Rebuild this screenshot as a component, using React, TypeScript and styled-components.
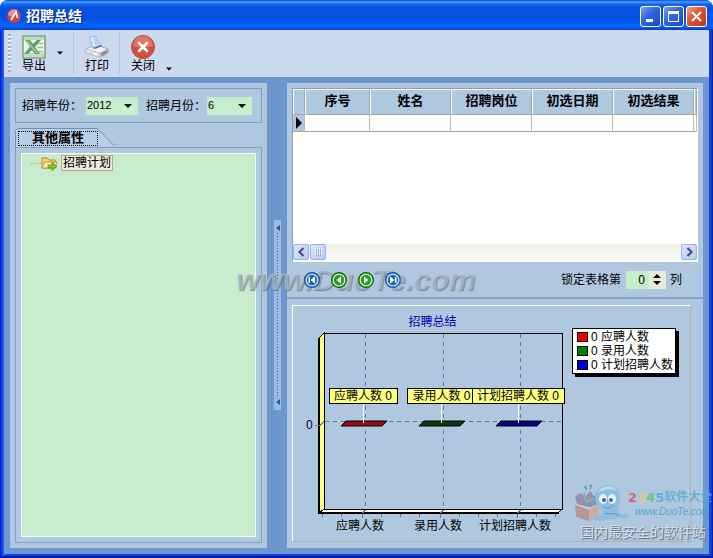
import React, { useState } from 'react';
import styled, { createGlobalStyle, css } from 'styled-components';

const GlobalStyle = createGlobalStyle`
  * { box-sizing: border-box; }
  html, body { margin: 0; background: #fff; }
  body, button, input, select, table {
    font-family: "Liberation Sans", "Noto Sans CJK SC", sans-serif;
    font-size: 12px;
    line-height: 14px;
    color: #000;
  }
  button { padding: 0; border: 0; background: none; cursor: default; }
`;

const line = '#7f9fc4';
const panel = '#b0c8df';
const green = '#c8edcd';

const Window = styled.div`
  position: relative;
  display: flex;
  flex-direction: column;
  min-height: 100vh;
  overflow: hidden;
  border-radius: 8px 8px 0 0;
  background: linear-gradient(90deg, #0014c8 0, #0a46e4 2px, #2b6cf0 4px, #0a46e4 5px, #0a46e4 calc(100% - 4px), #0a46e4 calc(100% - 2px), #0010a0 100%);
  border-bottom: 2px solid #0418b4;
`;

const TitleBar = styled.header`
  display: flex;
  align-items: center;
  gap: 5px;
  height: 30px;
  padding: 2px 6px 0 7px;
  background: linear-gradient(180deg, #0850c0 0, #4a9cff 2px, #1468ec 4px, #0652e0 8px, #0450e2 18px, #0864ff 25px, #0658f0 28px, #003cc0 30px);
`;

const Title = styled.h1`
  flex: 1;
  margin: 0;
  font-size: 14px;
  line-height: 18px;
  color: #fff;
  text-shadow: 1px 1px 1px #0a2080;
`;

const Captions = styled.div`
  display: flex;
  gap: 2px;
`;

const CaptionButton = styled.button<{ $danger?: boolean }>`
  display: grid;
  place-items: center;
  width: 21px;
  height: 21px;
  border: 1px solid #fff;
  border-radius: 3px;
  background: ${(p) =>
    p.$danger
      ? 'linear-gradient(135deg, #f0a088 0, #dd5a38 40%, #bc3814 100%)'
      : 'linear-gradient(135deg, #7ba2f4 0, #3568e2 40%, #1846c0 100%)'};
`;

const Toolbar = styled.nav`
  display: flex;
  align-items: stretch;
  height: 47px;
  margin: 0 4px;
  padding: 3px 4px;
  background: #cbdaee;
`;

const Grip = styled.div`
  width: 3px;
  margin: 1px 11px 2px 0;
  background: repeating-linear-gradient(180deg, #9fb3cf 0, #9fb3cf 2px, #fff 2px, #fff 3px, transparent 3px, transparent 4px);
`;

const ToolButton = styled.button`
  display: flex;
  flex-direction: column;
  align-items: center;
  width: 24px;
  padding-top: 2px;
  line-height: 15px;
  white-space: nowrap;
`;

const ToolDivider = styled.div`
  width: 1px;
  margin: 0 11px 0 10px;
  background: #b4c6df;
`;

const DropButton = styled.button<{ $low?: boolean }>`
  display: flex;
  align-items: ${(p) => (p.$low ? 'flex-end' : 'center')};
  margin-left: 11px;
  padding-bottom: ${(p) => (p.$low ? '3px' : '2px')};
`;

const Body = styled.main`
  display: flex;
  flex: 1;
  margin: 0 4px 2px;
  padding: 6px;
  background: #6c96cc;
`;

const LeftPane = styled.section`
  display: flex;
  flex-direction: column;
  width: 257px;
  padding: 5px;
  background: ${panel};
`;

const Filters = styled.form`
  display: flex;
  align-items: center;
  height: 35px;
  padding: 0 6px;
  border: 1px solid ${line};
`;

const FilterLabel = styled.label`
  width: 60px;
  white-space: nowrap;
`;

const SelectBox = styled.div<{ $wide?: boolean }>`
  display: grid;
  align-items: center;
  width: ${(p) => (p.$wide ? '52px' : '45px')};
  margin: 0 ${(p) => (p.$wide ? '8px' : '0')} 0 ${(p) => (p.$wide ? '4px' : '1px')};
  height: 18px;
  background: ${green};
  & > * { grid-area: 1 / 1; }
  & > svg { justify-self: end; margin-right: 6px; pointer-events: none; }
`;

const Select = styled.select`
  appearance: none;
  width: 100%;
  height: 18px;
  padding: 0 1px 2px;
  border: 0;
  border-radius: 0;
  background: transparent;
  font-size: 11px;
`;

const TabStrip = styled.div`
  display: flex;
  height: 24px;
  padding-top: 5px;
`;

const Tab = styled.button`
  display: grid;
  width: 100px;
  & > * { grid-area: 1 / 1; }
`;

const TabLabel = styled.span`
  z-index: 1;
  width: 78px;
  height: 13px;
  margin: 4px 0 0 4px;
  outline: 1px dotted #000;
  font-size: 13px;
  line-height: 12px;
  font-weight: bold;
`;

const TabPage = styled.div`
  display: flex;
  flex: 1;
  padding: 5px;
  border: 1px solid ${line};
`;

const Tree = styled.ul`
  flex: 1;
  margin: 0;
  padding: 1px 0 0 9px;
  list-style: none;
  border: 1px solid #fff;
  background: ${green};
`;

const TreeItem = styled.li`
  display: flex;
  align-items: center;
  height: 16px;
`;

const Branch = styled.span`
  width: 10px;
  border-top: 1px dotted #a0a8a0;
`;

const NodeLabel = styled.span`
  margin-left: 3px;
  padding: 0 1px;
  border: 1px solid #b8a890;
  background: #ece9d8;
`;

const SplitColumn = styled.div`
  display: flex;
  align-items: center;
  justify-content: center;
  width: 20px;
  padding: 0 6px 1px 7px;
`;

const SplitHandle = styled.button`
  display: flex;
  flex-direction: column;
  justify-content: space-between;
  align-items: center;
  width: 7px;
  height: 190px;
  padding: 5px 1px;
  background: #9dbbe2;
`;

const Dots = styled.span`
  flex: 1;
  width: 1px;
  margin: 2px 0;
  background: repeating-linear-gradient(180deg, #3c5c94 0, #3c5c94 1px, transparent 1px, transparent 3px);
`;

const RightPane = styled.section`
  display: flex;
  flex: 1;
  flex-direction: column;
  min-width: 0;
  background: ${panel};
`;

const GridBox = styled.div`
  display: flex;
  flex-direction: column;
  height: 174px;
  margin: 5px 5px 0;
  border: 1px solid #8e9eae;
  border-right-color: #fff;
  border-bottom-color: #fff;
  background: #fff;
`;

const GridScroll = styled.div`
  flex: 1;
  overflow: hidden;
`;

const Table = styled.table`
  width: 100%;
  table-layout: fixed;
  border-collapse: separate;
  border-spacing: 0;
`;

const Col = styled.col<{ $w?: number }>`
  width: ${(p) => (p.$w ? p.$w + 'px' : 'auto')};
`;

const Head = styled.th`
  height: 26px;
  padding: 0 0 3px;
  border: 1px solid #a5a59b;
  border-top-color: #fff;
  border-left-color: #fff;
  background: ${panel};
  font-size: 13px;
  line-height: 14px;
  white-space: nowrap;
`;

const Cell = styled.td<{ $marker?: boolean }>`
  height: 17px;
  padding: 0;
  line-height: 0;
  border-right: 1px solid #bcbcb8;
  border-bottom: 1px solid #a5a59b;
  ${(p) => p.$marker && css`background: ${panel};`}
`;

const ScrollBar = styled.div`
  display: flex;
  gap: 1px;
  height: 17px;
  background: linear-gradient(180deg, #f0eee6, #fcfcf8);
`;

const ScrollButton = styled.button`
  display: grid;
  place-items: center;
  width: 16px;
  height: 16px;
  border: 1px solid #9db5e4;
  border-radius: 2px;
  background: linear-gradient(135deg, #dce7fe, #b4c9f6);
`;

const ScrollTrack = styled.div`
  flex: 1;
`;

const Navigator = styled.div`
  display: flex;
  align-items: center;
  height: 37px;
  padding: 0 21px 0 17px;
  border-bottom: 2px solid #86a2c8;
`;

const NavButtons = styled.div`
  position: relative;
  z-index: 1;
  display: flex;
  gap: 11px;
  flex: 1;
`;

const NavButton = styled.button`
  display: block;
  width: 16px;
  height: 16px;
  line-height: 0;
`;

const SpinBox = styled.div`
  display: flex;
  width: 40px;
  height: 18px;
  margin: 0 4px 0 5px;
  background: ${green};
`;

const SpinInput = styled.input`
  width: 23px;
  padding: 0 4px 0 0;
  border: 0;
  background: transparent;
  text-align: right;
`;

const SpinButtons = styled.div`
  display: flex;
  flex-direction: column;
  justify-content: center;
  gap: 3px;
  width: 17px;
  align-items: center;
  background: #e6ebdc;
`;

const SpinButton = styled.button`
  display: block;
  height: 4px;
  line-height: 0;
`;

const ChartBox = styled.figure`
  display: grid;
  flex: 1;
  grid-template-columns: 279px 1fr;
  grid-template-rows: 22px 1fr;
  margin: 6px 12px 6px 5px;
  border: 1px solid #a9b2b4;
  border-top-color: #fff;
  border-left-color: #fff;
`;

const ChartTitle = styled.figcaption`
  padding-top: 9px;
  text-align: center;
  color: #0000a8;
`;

const Plot = styled.svg`
  display: block;
  grid-row: 2;
  overflow: visible;
`;

const Legend = styled.ul`
  grid-row: 2;
  grid-column: 2;
  justify-self: start;
  align-self: start;
  margin: 0;
  padding: 1px 2px 1px 4px;
  list-style: none;
  border: 1px solid #000;
  background: #fff;
  box-shadow: 3px 3px 0 #000;
`;

const LegendItem = styled.li`
  display: flex;
  align-items: center;
  gap: 3px;
  height: 14px;
  white-space: nowrap;
`;

const Swatch = styled.span<{ $color: string }>`
  width: 11px;
  height: 10px;
  border: 1px solid #000;
  background: ${(p) => p.$color};
`;

const CenterMark = styled.div`
  position: absolute;
  left: 236px;
  top: 264px;
  font-size: 30px;
  line-height: 32px;
  font-style: italic;
  font-weight: bold;
  color: rgba(190, 204, 216, 0.6);
  text-shadow: 1px 1px 1px rgba(70, 85, 100, 0.6);
  pointer-events: none;
`;

const CornerMark = styled.div`
  position: absolute;
  right: 0;
  bottom: 14px;
  display: grid;
  grid-template-columns: 56px 85px;
  pointer-events: none;
  opacity: 0.8;
`;

const MarkBrand = styled.div`
  display: flex;
  padding-top: 5px;
  font-size: 12px;
  line-height: 17px;
  font-weight: bold;
  color: #56aadb;
  white-space: nowrap;
`;

const BrandDigit = styled.span<{ $color: string }>`
  font-family: "DejaVu Sans", sans-serif;
  font-size: 13px;
  color: ${(p) => p.$color};
`;

const MarkUrl = styled.div`
  padding-left: 7px;
  font-size: 10px;
  line-height: 11px;
  font-style: italic;
  color: #3f9bd6;
`;

const MarkSlogan = styled.div`
  grid-column: 1 / -1;
  padding-left: 8px;
  font-size: 14px;
  line-height: 20px;
  color: #dfe8f0;
  text-shadow: 1px 1px 0 #5f6c7a, 1px 1px 1px #5f6c7a;
  white-space: nowrap;
`;

function DownArrow({ size = 7 }: { size?: number }) {
  return (
    <svg width={size} height={4} viewBox="0 0 8 4" aria-hidden="true">
      <path d="M0 0h8L4 4z" fill="#000" />
    </svg>
  );
}

function AppIcon() {
  return (
    <svg width="14" height="14" viewBox="0 0 14 14" aria-hidden="true">
      <circle cx="7" cy="7" r="6.8" fill="#d8403e" />
      <path d="M1 6a6 6 0 0 1 9-5L5 8z" fill="#f08c86" />
      <path d="m4 11 5-8 1.500 6" fill="none" stroke="#fff" strokeWidth="1.8" />
    </svg>
  );
}

function ExcelIcon() {
  return (
    <svg width="24" height="24" viewBox="0 0 24 24" aria-hidden="true">
      <path d="M1 1h22v22H1z" fill="#eaf5e7" stroke="#7aa67c" strokeWidth="1.6" />
      <path d="M2 2h20v3H2z" fill="#bcd9ba" />
      <path d="M15 5h7v17h-7z" fill="#f8fcf5" />
      <path d="M15 8.500h6M15 12.500h6M15 16.500h6" stroke="#99bb98" strokeWidth="1.4" />
      <path d="M2 18h20v4H2z" fill="#c2dbc2" />
      <path d="M3 5h5l3 4 4-4h4l-6 7 5 7h-5l-3-4-4 4H2l6-7z" fill="#5c9f64" />
      <path d="m5 6 10 12" stroke="#a2cf9d" strokeWidth="1.500" />
    </svg>
  );
}

function PrinterIcon() {
  return (
    <svg width="24" height="24" viewBox="0 0 24 24" aria-hidden="true">
      <path d="m1 14 9-4 13 4v4l-8 4-14-4z" fill="#a4a8b2" stroke="#888d9a" strokeWidth=".7" />
      <path d="m1 14 9-4 13 4-8 4z" fill="#f3f3f5" stroke="#a0a4ad" strokeWidth=".6" />
      <path d="m1 14 14 4v4L1 18z" fill="#dfe2e7" />
      <path d="M4 2 11 1c1 4 3 7 5 9l-8 3C6 10 7 6 4 2z" fill="#d9eaff" stroke="#83afe4" strokeWidth=".8" />
      <path d="m8 3 3-1c1 4 2 6 4 8l-4 1C9 8 10 6 8 3z" fill="#b0d2fa" />
      <path d="m7 13 9-3 2 1-8 3z" fill="#70788a" />
      <path d="m5 18 4-1 6 2-4 2z" fill="#fff" stroke="#a6abb5" strokeWidth=".5" />
      <path d="m17 19 4-2" stroke="#646a76" />
    </svg>
  );
}

function CloseIcon() {
  return (
    <svg width="24" height="24" viewBox="0 0 24 24" aria-hidden="true">
      <circle cx="12" cy="12" r="11.500" fill="#d74b3b" stroke="#a55a55" />
      <path d="M2 11a10 10 0 0 1 20 0c-6 2-14 2-20 0" fill="#e47466" />
      <path d="m8 8 8 8m0-8-8 8" stroke="#fff" strokeWidth="2.800" strokeLinecap="round" />
    </svg>
  );
}

function FolderIcon() {
  return (
    <svg width="17" height="15" viewBox="0 0 17 15" aria-hidden="true">
      <path d="M1 12V2h5l2 2h6v8z" fill="#f5cf70" stroke="#c58d28" />
      <path d="m1 12 3-6h12l-2 6z" fill="#ffeaa2" stroke="#c99a38" />
      <path d="M7 9h4V6l5 4.500-5 4V12H7z" fill="#7bc928" stroke="#4c951c" strokeWidth=".8" />
    </svg>
  );
}

type NavKind = 'first' | 'prev' | 'next' | 'last';

function NavIcon({ kind }: { kind: NavKind }) {
  const edge = kind === 'first' || kind === 'last';
  const flip = kind === 'next' || kind === 'last';
  return (
    <svg width="16" height="16" viewBox="0 0 16 16" aria-hidden="true">
      <circle cx="8" cy="8" r="7.300" fill={edge ? '#c4e2fa' : '#c8f4c4'} stroke={edge ? '#1b4f9c' : '#126412'} strokeWidth="1.400" />
      <circle cx="8" cy="8" r="5.200" fill={edge ? '#2467b8' : '#2f9a22'} />
      <g transform={flip ? 'translate(16 0) scale(-1 1)' : undefined} fill="#fff">
        <path d={edge ? 'M11 4.500v7L6.500 8z' : 'M10 4.500v7L5.500 8z'} />
        {edge && <path d="M4.500 5H6v6H4.500z" />}
      </g>
    </svg>
  );
}

function Mascot() {
  return (
    <svg width="60" height="38" viewBox="0 0 60 38" aria-hidden="true">
      <path d="m3 21 14 4v12L4 33z" fill="#b48e85" />
      <path d="m17 25 10-5v12l-10 5z" fill="#cda69a" />
      <path d="m1 20 8-5 18 5-10 6z" fill="#dfc4b7" />
      <path d="M3 13 9 9l4 5 5-7 4 5 5-2v10l-9 3-13-3z" fill="#638bc0" />
      <path d="m6 10 5 7-6 2M19 8l-3 9 6 1" fill="none" stroke="#d86c82" strokeWidth="2" />
      <path d="m12 8 2 10 8-4" fill="none" stroke="#78b783" strokeWidth="2" />
      <path d="M12 4 14 2v4m3-4 3-1-2 4" fill="none" stroke="#4f719c" />
      <path d="M23 13C23-3 48-3 48 14c0 8-4 10-1 14 4 4 8 0 11 4-4 5-12 0-14 2-5 4-7 0-10 2-6 2-10 0-14 0l2-4c6 1 8-3 8-6-4-3-7-7-7-13" fill="#83bce1" />
      <path d="M26 9c3-8 15-9 19-2-6-3-13-2-19 2" fill="#bde3f5" />
      <ellipse cx="31" cy="15" rx="4" ry="5" fill="#f8fcff" />
      <ellipse cx="40" cy="15" rx="4" ry="5" fill="#f8fcff" />
      <circle cx="32" cy="16" r="2" fill="#31577d" />
      <circle cx="39" cy="16" r="2" fill="#31577d" />
      <path d="M31 22c3 3 7 3 10-1M33 29c5 2 8-1 13 2" fill="none" stroke="#4b83b5" />
    </svg>
  );
}

const series = [
  { name: '应聘人数', color: '#f00000', dark: '#980a18', x: 70, boxX: 36, boxW: 68 },
  { name: '录用人数', color: '#008000', dark: '#083c10', x: 148, boxX: 114, boxW: 69 },
  { name: '计划招聘人数', color: '#0000e0', dark: '#000088', x: 225, boxX: 179, boxW: 92 },
];
const ticks = [29, 48, 88, 107, 126, 166, 185, 204, 243, 262];

function SummaryPlot() {
  return (
    <Plot width="279" height="208" viewBox="0 0 279 208" role="img" aria-label="招聘总结">
      <g shapeRendering="crispEdges">
        <path d="M31.500 5.500h238v176h-238z" fill="none" stroke="#000" />
        <path d="m26 10 5-5v176l-5 4z" fill="#ffff80" stroke="#000" />
        <path d="m26 185 5-4h238l-4 4z" fill="#fff" stroke="#000" />
        <path d="M26 10v175h240" fill="none" stroke="#000" strokeWidth="2" />
        <path d="M32 93.500h237" stroke="#667888" strokeDasharray="4 4" />
        <path d="M22 97.500h5l4-4" fill="none" stroke="#808080" />
        {ticks.map((x) => (
          <path key={x} d={`M${x}.5 186v3`} stroke="#707880" />
        ))}
        {series.map((s) => (
          <path key={s.name} d={`M${s.x - 1}.500 186v4m0-5 4-4M${s.x + 2}.500 6v175`} fill="none" stroke="#667888" strokeDasharray="4 4" />
        ))}
      </g>
      {series.map((s) => (
        <g key={s.name}>
          <path d={`M${s.x - 22} 98l5-5h41l-5 5z`} fill={s.dark} stroke="#000" />
          <path d={`M${s.x}.500 75v20`} stroke="#fff" />
          <rect x={s.boxX + 0.5} y="60.500" width={s.boxW} height="15" fill="#ffff80" stroke="#000" />
          <text x={s.boxX + s.boxW / 2} y="72" textAnchor="middle">{s.name} 0</text>
          <text x={s.x - 3} y="202" textAnchor="middle">{s.name}</text>
        </g>
      ))}
      <text x="13" y="101">0</text>
    </Plot>
  );
}

const columns = ['序号', '姓名', '招聘岗位', '初选日期', '初选结果'];
const navItems: { kind: NavKind; label: string }[] = [
  { kind: 'first', label: '首条' },
  { kind: 'prev', label: '上一条' },
  { kind: 'next', label: '下一条' },
  { kind: 'last', label: '末条' },
];

export default function App() {
  const [locked, setLocked] = useState(0);
  return (
    <Window>
      <GlobalStyle />
      <TitleBar>
        <AppIcon />
        <Title>招聘总结</Title>
        <Captions>
          <CaptionButton aria-label="最小化">
            <svg width="15" height="15" viewBox="0 0 15 15"><path d="M3 10h7v3H3z" fill="#fff" /></svg>
          </CaptionButton>
          <CaptionButton aria-label="最大化">
            <svg width="15" height="15" viewBox="0 0 15 15"><path d="M2.500 3v9.500h10V3" fill="none" stroke="#fff" /><path d="M2 2h11v3H2z" fill="#fff" /></svg>
          </CaptionButton>
          <CaptionButton $danger aria-label="关闭窗口">
            <svg width="15" height="15" viewBox="0 0 15 15"><path d="m3 3 9 9m0-9-9 9" stroke="#fff" strokeWidth="2" /></svg>
          </CaptionButton>
        </Captions>
      </TitleBar>
      <Toolbar>
        <Grip />
        <ToolButton><ExcelIcon />导出</ToolButton>
        <DropButton aria-label="导出选项"><DownArrow size={6} /></DropButton>
        <ToolDivider />
        <ToolButton><PrinterIcon />打印</ToolButton>
        <ToolDivider />
        <ToolButton><CloseIcon />关闭</ToolButton>
        <DropButton $low aria-label="更多"><DownArrow size={6} /></DropButton>
      </Toolbar>
      <Body>
        <LeftPane>
          <Filters>
            <FilterLabel htmlFor="year">招聘年份：</FilterLabel>
            <SelectBox $wide>
              <Select id="year" defaultValue="2012"><option>2012</option></Select>
              <DownArrow size={8} />
            </SelectBox>
            <FilterLabel htmlFor="month">招聘月份：</FilterLabel>
            <SelectBox>
              <Select id="month" defaultValue="6"><option>6</option></Select>
              <DownArrow size={8} />
            </SelectBox>
          </Filters>
          <TabStrip role="tablist">
            <Tab role="tab" aria-selected="true">
              <svg width="100" height="19" viewBox="0 0 100 19" aria-hidden="true">
                <path d="M.5 19V2.500l2-2h80L99.500 18" fill="#b8cee6" stroke="#6c90bd" />
              </svg>
              <TabLabel>其他属性</TabLabel>
            </Tab>
          </TabStrip>
          <TabPage role="tabpanel">
            <Tree>
              <TreeItem>
                <Branch />
                <FolderIcon />
                <NodeLabel>招聘计划</NodeLabel>
              </TreeItem>
            </Tree>
          </TabPage>
        </LeftPane>
        <SplitColumn>
          <SplitHandle aria-label="折叠左侧面板">
            <svg width="4" height="6" viewBox="0 0 4 6"><path d="M4 0v6L0 3z" fill="#2c5490" /></svg>
            <Dots />
            <svg width="4" height="6" viewBox="0 0 4 6"><path d="M4 0v6L0 3z" fill="#2c5490" /></svg>
          </SplitHandle>
        </SplitColumn>
        <RightPane>
          <GridBox>
            <GridScroll>
              <Table>
                <colgroup>
                  <Col $w={12} />
                  <Col $w={65} />
                  <Col $w={81} />
                  <Col $w={81} />
                  <Col $w={81} />
                  <Col $w={81} />
                  <Col />
                </colgroup>
                <thead>
                  <tr>
                    <Head />
                    {columns.map((c) => <Head key={c} scope="col">{c}</Head>)}
                    <Head />
                  </tr>
                </thead>
                <tbody>
                  <tr>
                    <Cell $marker>
                      <svg width="10" height="12" viewBox="0 0 10 12"><path d="M3 0l6 6-6 6z" fill="#000" /></svg>
                    </Cell>
                    {columns.map((c) => <Cell key={c} />)}
                    <Cell />
                  </tr>
                </tbody>
              </Table>
            </GridScroll>
            <ScrollBar>
              <ScrollButton aria-label="向左滚动">
                <svg width="9" height="10" viewBox="0 0 9 10"><path d="M6.500 1 2.500 5l4 4" fill="none" stroke="#3e5584" strokeWidth="2.200" /></svg>
              </ScrollButton>
              <ScrollButton aria-label="滚动滑块">
                <svg width="9" height="8" viewBox="0 0 9 8"><path d="M1.500 0v7m2-7v7m2-7v7m2-7v7" stroke="#f4f8ff" /><path d="M2.500 1v7m2-7v7m2-7v7" stroke="#91abdf" /></svg>
              </ScrollButton>
              <ScrollTrack />
              <ScrollButton aria-label="向右滚动">
                <svg width="9" height="10" viewBox="0 0 9 10"><path d="m2.500 1 4 4-4 4" fill="none" stroke="#3e5584" strokeWidth="2.200" /></svg>
              </ScrollButton>
            </ScrollBar>
          </GridBox>
          <Navigator>
            <NavButtons>
              {navItems.map((n) => (
                <NavButton key={n.kind} aria-label={n.label}><NavIcon kind={n.kind} /></NavButton>
              ))}
            </NavButtons>
            <label htmlFor="locked">锁定表格第</label>
            <SpinBox>
              <SpinInput id="locked" inputMode="numeric" value={locked} onChange={(e) => setLocked(Number(e.target.value) || 0)} />
              <SpinButtons>
                <SpinButton aria-label="增加" onClick={() => setLocked(locked + 1)}>
                  <svg width="8" height="4" viewBox="0 0 8 4"><path d="M0 4h8L4 0z" /></svg>
                </SpinButton>
                <SpinButton aria-label="减少" onClick={() => setLocked(Math.max(0, locked - 1))}>
                  <svg width="8" height="4" viewBox="0 0 8 4"><path d="M0 0h8L4 4z" /></svg>
                </SpinButton>
              </SpinButtons>
            </SpinBox>
            <span>列</span>
          </Navigator>
          <ChartBox>
            <ChartTitle>招聘总结</ChartTitle>
            <SummaryPlot />
            <Legend>
              {series.map((s) => (
                <LegendItem key={s.name}>
                  <Swatch $color={s.color} />
                  <span>0 {s.name}</span>
                </LegendItem>
              ))}
            </Legend>
          </ChartBox>
        </RightPane>
      </Body>
      <CenterMark>www.DuoTe.com</CenterMark>
      <CornerMark>
        <Mascot />
        <div>
          <MarkBrand>
            <BrandDigit $color="#e8486a">2</BrandDigit>
            <BrandDigit $color="#e6cf58">3</BrandDigit>
            <BrandDigit $color="#64bd70">4</BrandDigit>
            <BrandDigit $color="#4ba5df">5</BrandDigit>
            <span>软件大全</span>
          </MarkBrand>
          <MarkUrl>www.DuoTe.com</MarkUrl>
        </div>
        <MarkSlogan>国内最安全的软件站</MarkSlogan>
      </CornerMark>
    </Window>
  );
}
